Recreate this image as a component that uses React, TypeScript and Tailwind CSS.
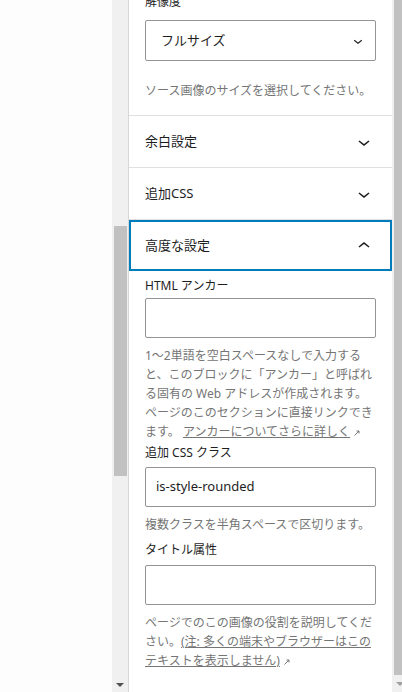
import React from "react";

const font = { fontFamily: '"Noto Sans", "Noto Sans CJK JP", sans-serif' };

function ChevronDown({ className }: { className?: string }) {
  return (
    <svg viewBox="0 0 24 24" className={className} fill="currentColor">
      <path d="M17.5 11.6L12 16l-5.5-4.4.9-1.2L12 14l4.5-3.6 1 1.2z" />
    </svg>
  );
}

function ChevronUp({ className }: { className?: string }) {
  return (
    <svg viewBox="0 0 24 24" className={className} fill="currentColor">
      <path d="M6.5 12.4L12 8l5.5 4.4-.9 1.2L12 10l-4.5 3.6-1-1.2z" />
    </svg>
  );
}

function External() {
  return (
    <svg viewBox="0 0 8 8" className="inline-block w-[8px] h-[8px] ml-[3px] align-middle" fill="none" stroke="#757575" strokeWidth="1">
      <path d="M1.5 6.5L6 2M3.5 2H6v2.5" />
    </svg>
  );
}

function Section({ title }: { title: string }) {
  return (
    <div className="border-t border-[#e0e0e0]">
      <div className="h-[51px] flex items-center justify-between px-4 text-[13px] text-[#1e1e1e]">
        <span>{title}</span>
        <ChevronDown className="w-6 h-6" />
      </div>
    </div>
  );
}

export default function App() {
  return (
    <div className="flex w-[402px] h-[692px] overflow-hidden bg-white" style={font}>
      <div className="w-[112px] bg-[#fdfdfd]" />

      {/* editor scrollbar */}
      <div className="w-[16px] bg-[#f0f0f0] flex flex-col items-center">
        <div className="mt-[226px] h-[250px] w-[13px] bg-[#c1c1c1]" />
        <div className="mt-auto mb-[5px] w-0 h-0 border-l-[4px] border-r-[4px] border-t-[4px] border-l-transparent border-r-transparent border-t-[#505050]" />
      </div>
      <div className="w-px bg-[#d6d6d6]" />

      {/* sidebar */}
      <div className="w-[263px] flex flex-col">
        <div className="px-4 pb-[15px]">
          <div className="-mt-[6px] h-4 leading-4 text-[12px] text-[#1e1e1e]">解像度</div>
          <div className="mt-[10px] h-[41px] rounded-[2px] border border-[#949494] flex items-center justify-between pl-[15px] pr-[8px] text-[13px] text-[#1e1e1e]">
            <span>フルサイズ</span>
            <ChevronDown className="w-[18px] h-[18px]" />
          </div>
          <p className="mt-[20px] text-[12px] leading-[19px] text-[#757575]">ソース画像のサイズを選択してください。</p>
        </div>

        <Section title="余白設定" />
        <Section title="追加CSS" />

        <div className="border-t border-[#e0e0e0]">
          <div className="h-[51px] flex items-center justify-between px-4 text-[13px] text-[#1e1e1e] shadow-[inset_0_0_0_2px_#007cba]">
            <span>高度な設定</span>
            <ChevronUp className="w-6 h-6" />
          </div>
          <div className="px-4 pt-[7px] text-[#1e1e1e]">
            <div className="h-4 leading-4 text-[12px]">HTML アンカー</div>
            <div className="mt-[4px] h-[40px] rounded-[2px] border border-[#949494]" />
            <p className="mt-[8px] text-[12px] leading-[19px] text-[#757575]">
              1〜2単語を空白スペースなしで入力すると、このブロックに「アンカー」と呼ばれる固有の Web アドレスが作成されます。ページのこのセクションに直接リンクできます。 <span className="underline">アンカーについてさらに詳しく</span>
              <External />
            </p>

            <div className="mt-[4px] h-4 leading-4 text-[12px]">追加 CSS クラス</div>
            <div className="mt-[6px] h-[40px] rounded-[2px] border border-[#949494] flex items-center px-[10px] text-[13px]">
              is-style-rounded
            </div>
            <p className="mt-[8px] text-[12px] leading-[19px] text-[#757575]">複数クラスを半角スペースで区切ります。</p>

            <div className="mt-[8px] h-4 leading-4 text-[12px]">タイトル属性</div>
            <div className="mt-[7px] h-[40px] rounded-[2px] border border-[#949494]" />
            <p className="mt-[8px] text-[12px] leading-[19px] text-[#757575]">
              ページでのこの画像の役割を説明してください。<span className="underline">(注: 多くの端末やブラウザーはこのテキストを表示しません)</span>
              <External />
            </p>
          </div>
        </div>
      </div>

      {/* sidebar scrollbar */}
      <div className="flex-1 bg-[#f0f0f0] flex flex-col items-end">
        <div className="h-[675px] w-[8px] bg-[#c1c1c1]" />
        <div className="mt-auto mb-[6px] mr-[-2px] w-0 h-0 border-l-[4px] border-r-[4px] border-t-[4px] border-l-transparent border-r-transparent border-t-[#a0a0a0]" />
      </div>
    </div>
  );
}
